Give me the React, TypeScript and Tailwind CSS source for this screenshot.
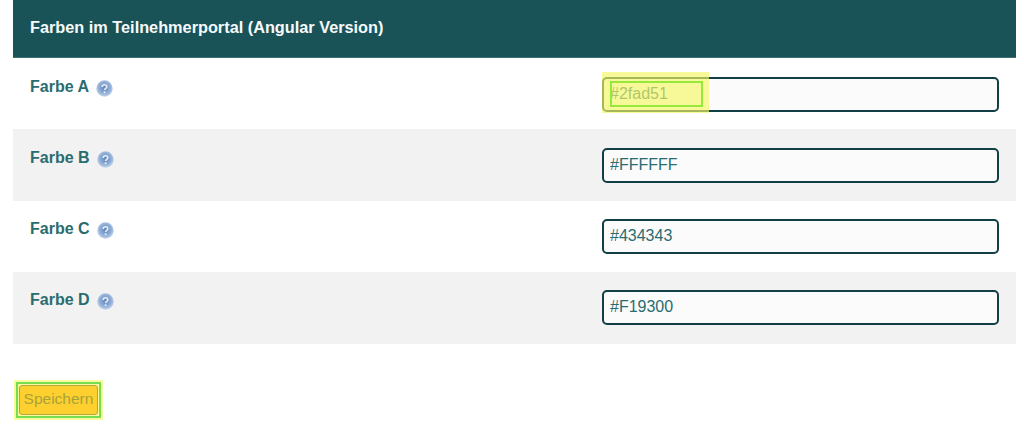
import React from 'react';

interface ColorRow {
  label: string;
  value: string;
  rowClass: string;
}

const rows: ColorRow[] = [
  { label: 'Farbe A', value: '#2fad51', rowClass: 'h-[71px] pt-[19px] bg-white' },
  { label: 'Farbe B', value: '#FFFFFF', rowClass: 'h-[72px] pt-[19px] bg-[#f2f2f2]' },
  { label: 'Farbe C', value: '#434343', rowClass: 'h-[71px] pt-[18px] bg-white' },
  { label: 'Farbe D', value: '#F19300', rowClass: 'h-[72px] pt-[18px] bg-[#f2f2f2]' },
];

const HelpIcon: React.FC = () => (
  <svg width="17" height="17" viewBox="0 0 17 17" className="ml-[7px] mt-[3px] shrink-0">
    <defs>
      <radialGradient id="help" cx="50%" cy="45%" r="55%">
        <stop offset="0%" stopColor="#5f86bb" />
        <stop offset="62%" stopColor="#8fadd6" />
        <stop offset="100%" stopColor="#c3d4ea" />
      </radialGradient>
    </defs>
    <circle cx="8.5" cy="8.5" r="8.2" fill="url(#help)" />
    <path d="M6.2 7c0-1.4 1-2.2 2.3-2.2s2.3.8 2.3 2c0 1.6-2.1 1.6-2.1 3.1" fill="none" stroke="#e6edf7" strokeWidth="1.6" />
    <circle cx="8.6" cy="12.3" r="1.05" fill="#e6edf7" />
  </svg>
);

const App: React.FC = () => {
  return (
    <div className="w-[1024px] h-[424px] bg-white overflow-hidden font-['Liberation_Sans',Arial,sans-serif]">
      <div className="ml-[13px] w-[1003px]">
        <div className="h-[58px] bg-[#195358] border-b border-[#3d6f73] pl-[17px] pt-[18px] text-[16.3px] leading-[18px] font-bold text-[#f7fafa]">
          Farben im Teilnehmerportal (Angular Version)
        </div>

        {rows.map((row, i) => (
          <div key={row.label} className={`flex justify-between pl-[17px] pr-[17px] ${row.rowClass}`}>
            <div className="flex items-start text-[16px] leading-[19px] font-bold text-[#2a6c70]">
              {row.label}
              <HelpIcon />
            </div>
            <div className="relative w-[397px] h-[35px]">
              <input
                readOnly
                value={row.value}
                className="w-full h-full bg-[#fbfbfb] border-2 border-[#123f45] rounded-[5px] pl-[6px] pb-[2px] text-[16px] text-[#2a6c70] outline-none font-['Liberation_Sans',Arial,sans-serif]"
              />
              {i === 0 && (
                <div className="absolute left-0 top-[-5px] w-[107px] h-[41px] bg-[#f5f764]/65">
                  <div className="ml-[8px] mt-[9px] w-[93px] h-[26px] border-2 border-[#97e83c]" />
                </div>
              )}
            </div>
          </div>
        ))}

        <div className="relative mt-[38px] ml-[3px] w-[85px] h-[36px]">
          <div className="absolute -inset-x-[2px] -inset-y-[2px] bg-[#f9fb9c]" />
          <div className="relative w-full h-full border-2 border-[#78dc50] p-[1px]">
            <button className="w-full h-full bg-[#fdd02f] border border-[#b9a63a] rounded-[3px] pb-[2px] text-[15.5px] leading-none text-[#a9a23a] font-['Liberation_Sans',Arial,sans-serif]">
              Speichern
            </button>
          </div>
        </div>
      </div>
    </div>
  );
};

export default App;
